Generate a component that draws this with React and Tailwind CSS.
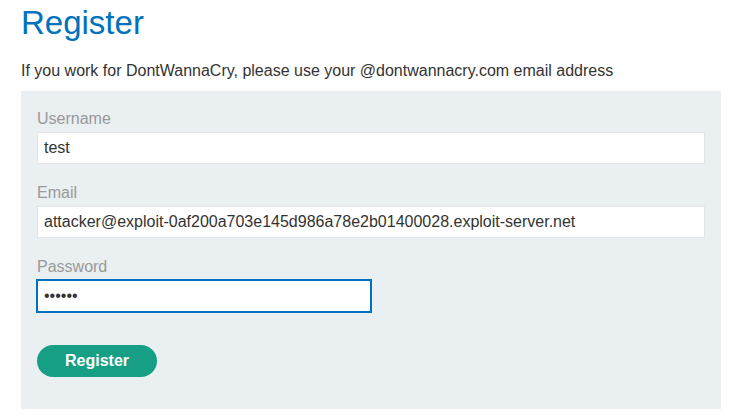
export default function App() {
  return (
    <div className="min-h-[417px] bg-white px-[21px] font-['Liberation_Sans',Arial,sans-serif] text-[#333332]">
      <h1 className="pt-[3px] text-[33px] leading-[40px] text-[#0071bc]">Register</h1>
      <p className="mt-[19px] text-[16px] leading-[18px]">
        If you work for DontWannaCry, please use your @dontwannacry.com email address
      </p>
      <form className="mt-[11px] w-[700px] bg-[#eaeff2] px-[16px] pb-[32px] pt-[19px]">
        <label className="block text-[16px] leading-[18px] text-[#999]">Username</label>
        <input
          readOnly
          value="test"
          className="mt-[4px] block h-[32px] w-[668px] border border-[#e3e6e8] bg-white px-[6px] text-[16px] text-[#333332] outline-none"
        />
        <label className="mt-[20px] block text-[16px] leading-[18px] text-[#999]">Email</label>
        <input
          readOnly
          value="attacker@exploit-0af200a703e145d986a78e2b01400028.exploit-server.net"
          className="mt-[4px] block h-[32px] w-[668px] border border-[#e3e6e8] bg-white px-[6px] text-[16px] text-[#333332] outline-none"
        />
        <label className="mt-[20px] block text-[16px] leading-[18px] text-[#999]">Password</label>
        <input
          readOnly
          type="password"
          value="123456"
          className="-ml-px mt-[3px] block h-[34px] w-[336px] border-2 border-[#0071bc] bg-white px-[6px] text-[16px] text-[#333332] outline-none"
        />
        <button
          type="button"
          className="mt-[32px] block h-[32px] w-[120px] rounded-full bg-[#169f84] text-[16px] font-bold text-white"
        >
          Register
        </button>
      </form>
    </div>
  )
}
